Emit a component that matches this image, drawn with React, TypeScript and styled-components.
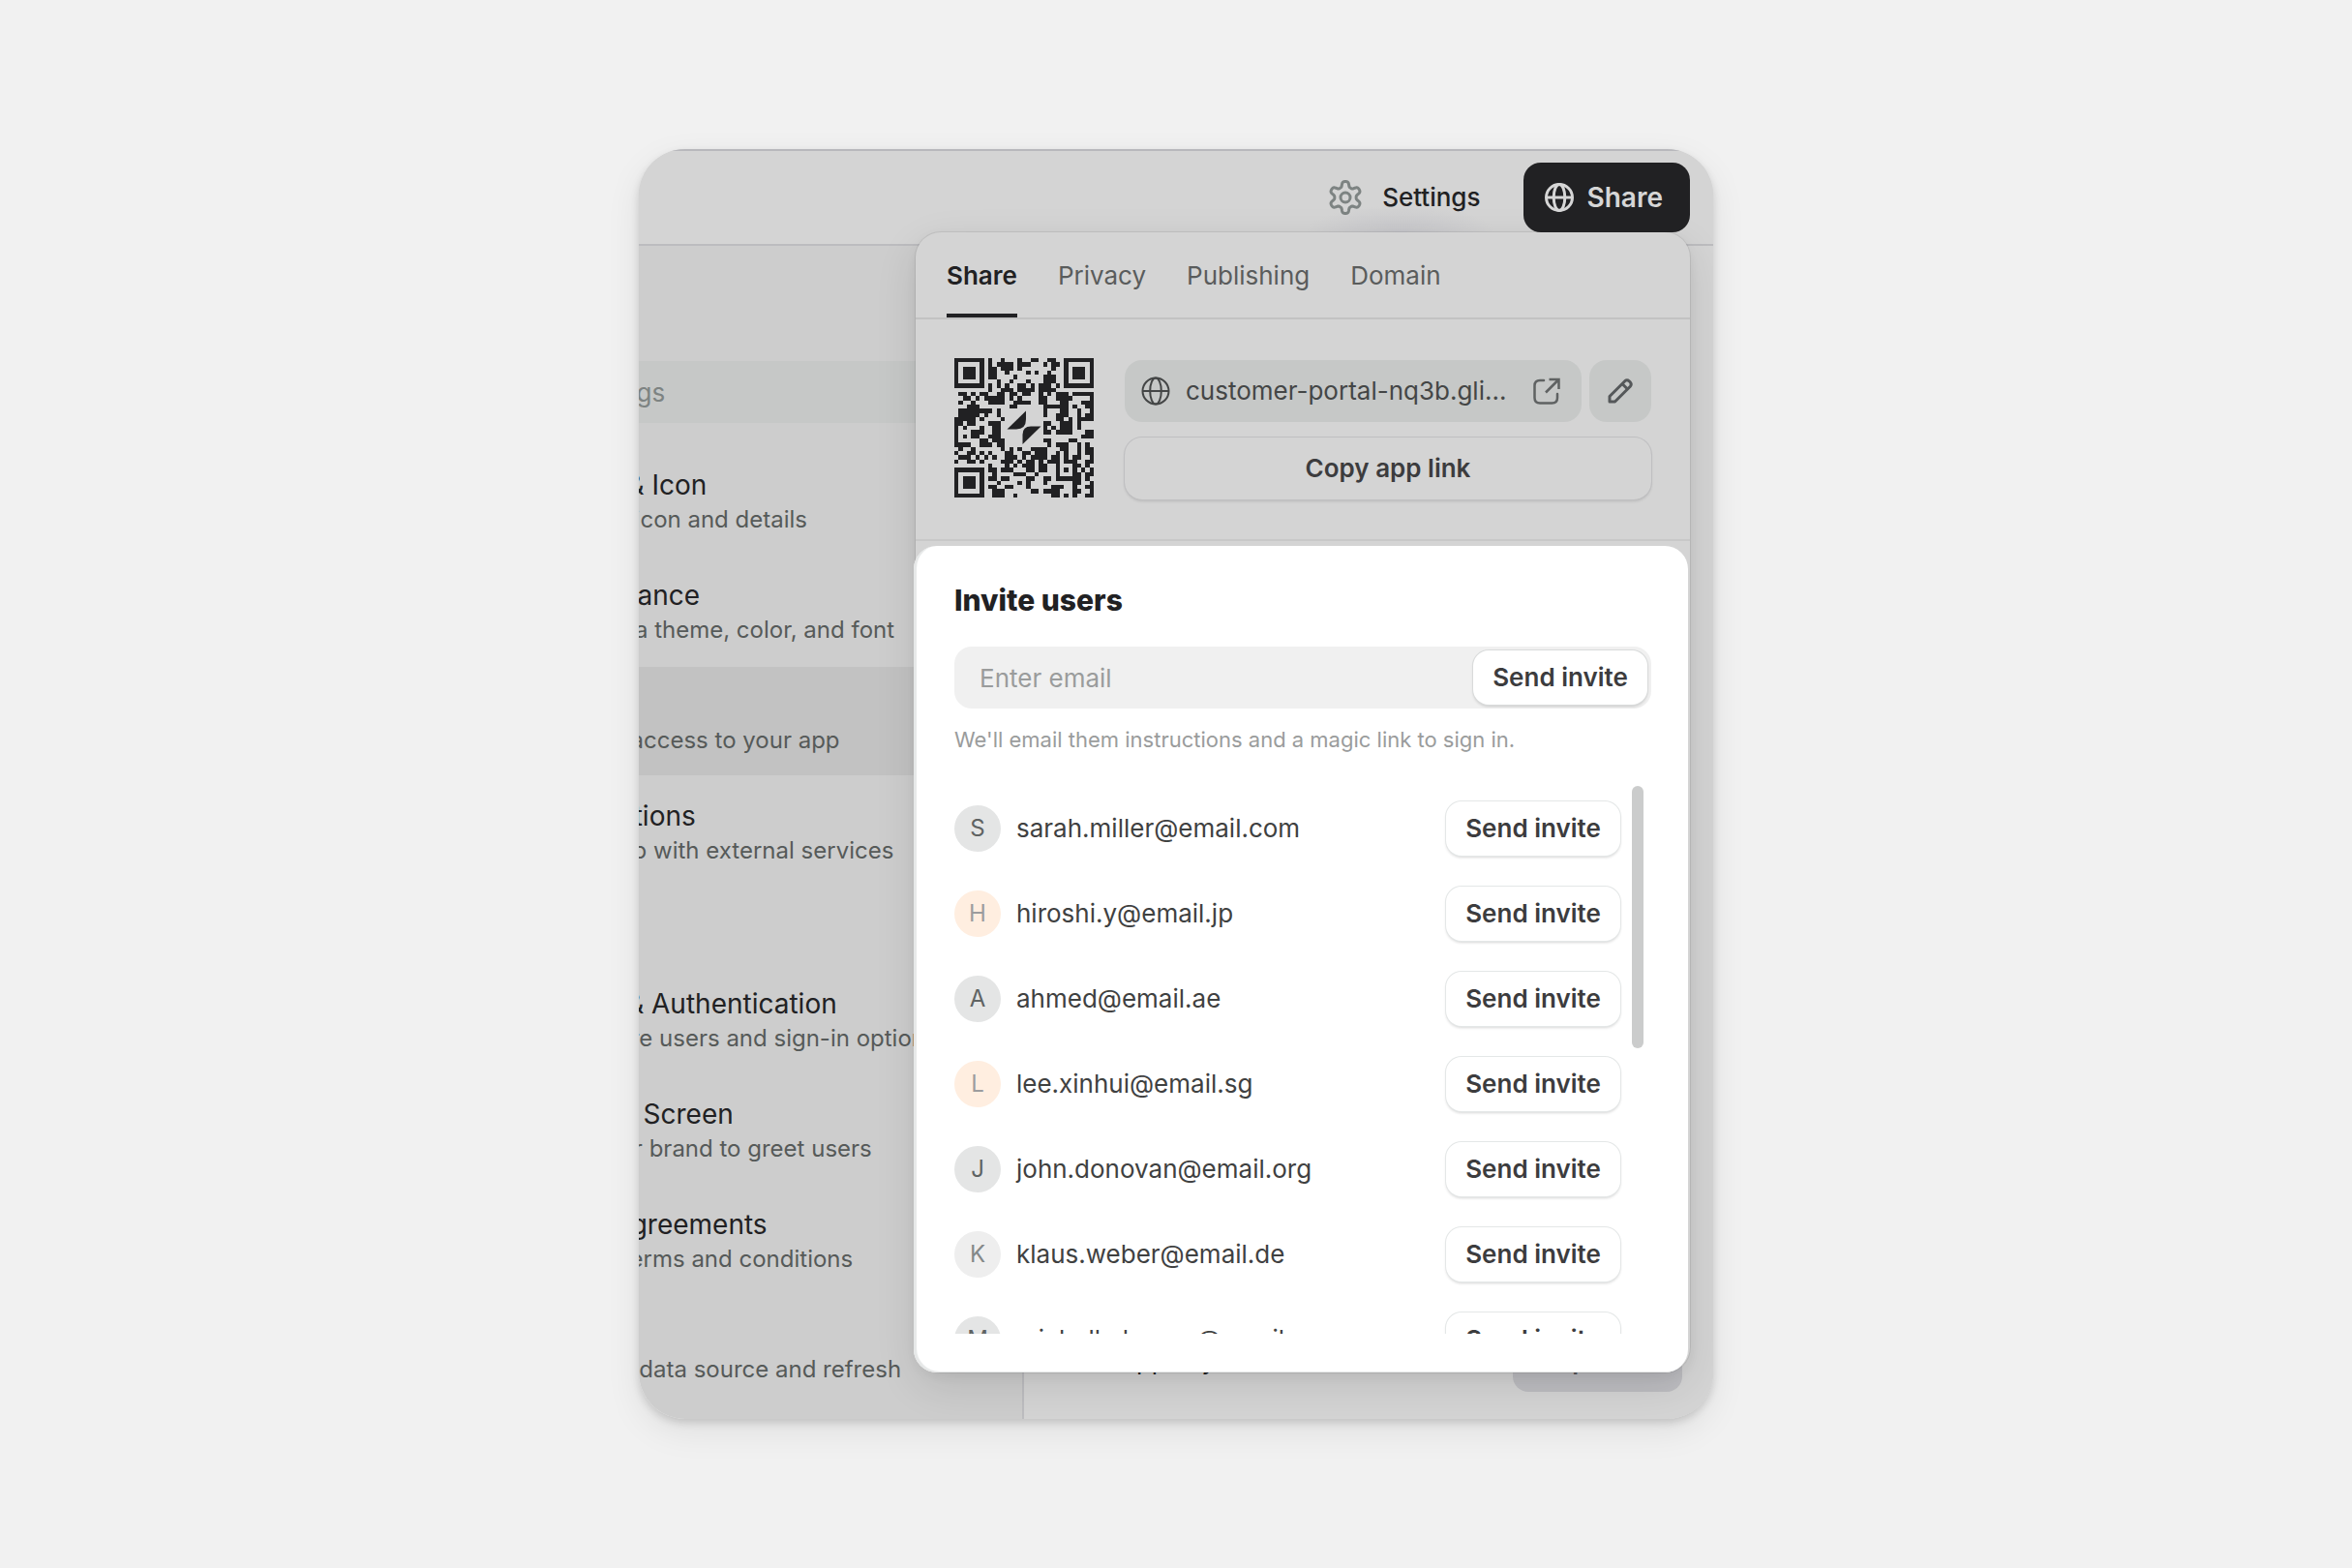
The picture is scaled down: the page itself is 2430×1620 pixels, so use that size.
import React from "react";
import styled, { createGlobalStyle } from "styled-components";

const GlobalStyle = createGlobalStyle`
  *, *::before, *::after { box-sizing: border-box; }
  body {
    margin: 0;
    background: #f1f1f1;
    color: #212123;
    font-family: Inter, "Liberation Sans", Arial, sans-serif;
    font-size: 26px;
    line-height: 32px;
    -webkit-font-smoothing: antialiased;
  }
  button, input {
    font: inherit;
    color: inherit;
    border: 0;
    margin: 0;
    padding: 0;
    background: none;
  }
  button { cursor: pointer; }
  h2, h3, p, ul { margin: 0; padding: 0; font-weight: inherit; font-size: inherit; }
  ul { list-style: none; }
`;

const Page = styled.main`
  min-height: 100vh;
  display: flex;
  align-items: center;
  justify-content: center;
`;

const Window = styled.div`
  position: relative;
  width: 100%;
  max-width: 1110px;
  overflow: hidden;
  border-radius: 48px;
  background: #cdcdcd;
`;

const WindowShadow = styled.div`
  width: 100%;
  max-width: 1110px;
  border-radius: 48px;
  box-shadow: 0 4px 8px rgba(0, 0, 0, 0.14), 0 12px 36px rgba(0, 0, 0, 0.08);
`;

const TopBar = styled.header`
  display: flex;
  align-items: center;
  justify-content: flex-end;
  gap: 44px;
  padding: 12px 24px;
  border-top: 2px solid #b8b8bc;
  border-bottom: 2px solid #bcbcbf;
  background: radial-gradient(ellipse 100px 30px at calc(100% - 323px) 86px, #c6c6ca, rgba(198, 198, 202, 0)) #d4d4d4;
`;

const SettingsButton = styled.button`
  display: flex;
  align-items: center;
  gap: 20px;
  font-weight: 500;
`;

const ShareButton = styled.button`
  position: relative;
  z-index: 2;
  display: flex;
  align-items: center;
  gap: 14px;
  height: 72px;
  padding: 0 28px 0 22px;
  border-radius: 18px;
  background: #212123;
  color: #d6d6d6;
  font-size: 28px;
  font-weight: 600;
`;

const Body = styled.div`
  display: flex;
`;

const Sidebar = styled.aside`
  flex: none;
  width: 638px;
  margin-left: -240px;
  padding: 119px 0 15px;
  border-right: 2px solid #bdbdc0;
`;

const SearchField = styled.input`
  display: block;
  width: 614px;
  height: 64px;
  margin-bottom: 24px;
  padding: 0 24px 0 77px;
  border-radius: 16px;
  background: #c6c8c7;
  &::placeholder { color: #7d8382; opacity: 1; }
`;

const NavGroup = styled.ul`
  display: grid;
  gap: 2px;
  & + & { margin-top: 82px; }
`;

const NavLink = styled.a<{ $active?: boolean }>`
  display: grid;
  gap: 2px;
  padding: 22px 24px 20px 142px;
  background: ${(p) => (p.$active ? "#c2c2c2" : "transparent")};
  color: inherit;
  text-decoration: none;
  white-space: nowrap;
`;

const NavTitle = styled.span`
  font-size: 28px;
  line-height: 36px;
`;

const NavHint = styled.span`
  font-size: 24px;
  line-height: 32px;
  color: #565a59;
`;

const Workspace = styled.section`
  flex: 1;
  display: flex;
  align-items: flex-end;
  justify-content: space-between;
  padding: 0 32px 28px 98px;
  background: #d4d4d4;
`;

const WorkspaceLabel = styled.span`
  line-height: 64px;
`;

const UpdateButton = styled.button`
  width: 175px;
  height: 64px;
  border-radius: 16px;
  background: #bdbdc1;
  font-weight: 600;
  color: #5b5b5e;
`;

const Popover = styled.div`
  position: absolute;
  z-index: 1;
  top: 86px;
  right: 24px;
  width: 800px;
  border-radius: 26px;
  background: #d4d4d4;
  box-shadow: 0 0 0 1px rgba(0, 0, 0, 0.07), 0 4px 12px rgba(0, 0, 0, 0.05),
    0 14px 44px rgba(0, 0, 0, 0.11);
`;

const Tabs = styled.div`
  display: flex;
  gap: 42px;
  padding: 0 32px;
  border-bottom: 2px solid #c2c2c2;
`;

const Tab = styled.button<{ $active?: boolean }>`
  height: 88px;
  padding-top: 6px;
  border-bottom: 4px solid ${(p) => (p.$active ? "#212123" : "transparent")};
  color: ${(p) => (p.$active ? "#212123" : "#5a5c5c")};
  font-weight: ${(p) => (p.$active ? 600 : 400)};
`;

const LinkSection = styled.section`
  display: flex;
  gap: 32px;
  padding: 40px 40px 41px;
  border-bottom: 2px solid #c8c8c8;
`;

const LinkControls = styled.div`
  flex: 1;
  display: grid;
  gap: 16px;
  padding-top: 2px;
`;

const UrlRow = styled.div`
  display: flex;
  gap: 8px;
`;

const UrlLink = styled.a`
  flex: 1;
  display: flex;
  align-items: center;
  height: 64px;
  padding: 0 22px 0 17px;
  border-radius: 18px;
  background: #c6c8c7;
  color: #444646;
  text-decoration: none;
`;

const UrlText = styled.span`
  flex: 1;
  padding-left: 16px;
  white-space: nowrap;
`;

const IconButton = styled.button`
  display: grid;
  place-items: center;
  width: 64px;
  height: 64px;
  border-radius: 18px;
  background: #c6c8c7;
`;

const CopyButton = styled.button`
  height: 64px;
  border-radius: 18px;
  color: #3c3c3e;
  font-weight: 600;
  box-shadow: 0 0 0 1px #bfbfc1, 0 2px 3px rgba(0, 0, 0, 0.12);
`;

const InvitePanel = styled.section`
  margin: 5px 2px 0 -2px;
  padding: 38px 38px 40px 42px;
  border-radius: 24px;
  background: #ffffff;
  box-shadow: inset 3px -1px 1px #e6e8e8;
`;

const PanelTitle = styled.h2`
  margin-bottom: 30px;
  font-size: 30px;
  line-height: 36px;
  font-weight: 800;
`;

const InviteForm = styled.form`
  display: flex;
  align-items: center;
  padding-right: 4px;
  border-radius: 18px;
  background: #f0f0f0;
`;

const EmailInput = styled.input`
  flex: 1;
  min-width: 0;
  height: 64px;
  padding: 0 26px;
  &::placeholder { color: #9a9c9c; opacity: 1; }
`;

const SendButton = styled.button<{ $raised?: boolean }>`
  flex: none;
  width: 180px;
  height: 56px;
  border-radius: 16px;
  background: #ffffff;
  color: #3c3c3e;
  font-weight: 600;
  box-shadow: 0 0 0 1px ${(p) => (p.$raised ? "#d9dbdb" : "#e4e7e7")},
    0 2px 3px rgba(0, 0, 0, 0.16);
`;

const Hint = styled.p`
  margin: 16px 0 32px;
  font-size: 22px;
  line-height: 32px;
  color: #9a9c9c;
`;

const ListArea = styled.div`
  display: flex;
  gap: 12px;
  max-height: 566px;
  padding-right: 8px;
  overflow: hidden;
`;

const PeopleList = styled.ul`
  flex: 1;
  margin-left: -4px;
  padding-left: 4px;
`;

const Person = styled.li`
  display: flex;
  align-items: center;
  height: 88px;
  color: #3f4141;
`;

type Tone = "gray" | "peach" | "light";

const toneFill: Record<Tone, string> = { gray: "#e4e5e5", peach: "#ffeee0", light: "#eeeeee" };
const toneInk: Record<Tone, string> = { gray: "#5f6363", peach: "#9c9c9e", light: "#848888" };

const Avatar = styled.span<{ $tone: Tone }>`
  display: grid;
  place-items: center;
  width: 48px;
  height: 48px;
  margin-right: 16px;
  border-radius: 50%;
  background: ${(p) => toneFill[p.$tone]};
  color: ${(p) => toneInk[p.$tone]};
  font-size: 24px;
`;

const Email = styled.span`
  flex: 1;
`;

const ScrollThumb = styled.div`
  width: 12px;
  height: 271px;
  border-radius: 6px;
  background: #cbcccc;
`;

const finder = (x: number, y: number) => (
  <g key={`${x}-${y}`}>
    <path fillRule="evenodd" d={`M${x} ${y}h7v7h-7z M${x + 1} ${y + 1}v5h5v-5z`} />
    <path d={`M${x + 2} ${y + 2}h3v3h-3z`} />
  </g>
);

/* Dark columns of each row of the code, finder squares left out. */
const qrRows = [
  "8 11 15 18 19 22 23",
  "8 10 11 12 13 15 16 17 21 23 24",
  "8 9 11 12 13 15 23",
  "8 9 12 17 19 22",
  "8 9 14 21 22 23",
  "10 13 17 21 22 23",
  "8 10 12 15 16 18 20 21 22 24",
  "8 11 12 13 15 16 17 18 20 21 22 23",
  "1 2 4 6 7 10 11 13 14 16 17 20 22 24 25 26 28 29 30 31 32",
  "2 3 5 7 8 9 10 11 13 15 20 21 24 25 26 27 32",
  "1 4 8 9 10 11 14 15 16 17 20 21 25 26 30 31 32",
  "3 4 5 13 14 21 22 23 24 25 26 28 31 32",
  "1 2 3 4 5 6 7 8 10 21 25 26 29 32",
  "1 2 3 4 5 7 10 21 24 25 26 29 31 32",
  "0 1 2 3 4 6 11 24 25 27 29 30 31 32",
  "0 1 3 4 8 9 10 21 22 25 26 27 29",
  "0 2 6 9 10 21 23 25 26 27 29",
  "0 4 5 6 9 10 21 22 24 25 26 27 31 32",
  "0 2 4 5 8 9 10 30 31 32",
  "0 6 7 9 10 11 21 22 27 28",
  "0 1 2 3 6 7 8 10 11 22 24 25 26 29 31",
  "1 4 11 13 15 18 19 20 21 25 26 29 31 32",
  "0 3 4 6 8 12 13 16 17 19 20 21 24 26 29 31 32",
  "1 2 3 5 7 9 12 13 14 16 18 19 20 21 23 24 26 28 29 32",
  "0 3 4 6 11 12 13 15 17 18 20 22 23 24 26 27 28 31 32",
  "8 12 14 16 17 18 20 21 24 28 29 31",
  "8 9 11 12 13 17 18 20 21 24 26 28 30 32",
  "9 14 15 16 19 24 28 29 31 32",
  "8 9 11 12 17 18 21 22 24 25 26 27 28 29 31",
  "10 15 17 21 28 29 32",
  "8 9 12 13 17 23 24 25 28 31 32",
  "9 10 11 18 19 21 22 23 24 28 29 32",
  "9 10 11 14 23 24 26 28 31 32",
];

const QrCode = () => (
  <svg width="144" height="144" viewBox="0 0 33 33" fill="#212123" shapeRendering="crispEdges" role="img" aria-label="App link code">
    {[finder(0, 0), finder(26, 0), finder(0, 26)]}
    {qrRows.map((row, y) => (
      <path key={y} d={row.split(" ").map((x) => `M${x} ${y}h1v1h-1z`).join("")} />
    ))}
    <g transform="scale(0.2292)" shapeRendering="auto">
      <path d="M54.5 73.5 74 54.5V63Q74 73.5 64 73.5Z" />
      <path d="M89.500 70.500 70.500 89V79Q70.500 70.500 79 70.500Z" />
    </g>
  </svg>
);

const GlobeIcon = ({ stroke = 3 }: { stroke?: number }) => (
  <svg width="30" height="30" viewBox="0 0 30 30" fill="none" stroke="currentColor" strokeWidth={stroke} aria-hidden="true">
    <circle cx="15" cy="15" r="13.500" />
    <ellipse cx="15" cy="15" rx="5.800" ry="13.500" />
    <path d="M1.500 15h27" />
  </svg>
);

const gearPath =
  Array.from({ length: 145 }, (_, i) => {
    const a = (i / 144) * Math.PI * 2 - Math.PI / 2;
    const r = 13.8 - 2.8 * Math.tanh(1.8 * Math.cos(6 * a));
    return `${i ? "L" : "M"}${(18 + r * Math.cos(a)).toFixed(2)} ${(18 + r * Math.sin(a)).toFixed(2)}`;
  }).join("") + "Z";

const GearIcon = () => (
  <svg width="36" height="36" viewBox="0 0 36 36" fill="none" stroke="#7d8382" strokeWidth="3" strokeLinejoin="round" aria-hidden="true">
    <path d={gearPath} />
    <circle cx="18" cy="18" r="5" />
  </svg>
);

const OpenIcon = () => (
  <svg width="28" height="28" viewBox="0 0 28 28" fill="none" stroke="#5f6262" strokeWidth="2.500" aria-hidden="true">
    <path d="M11 3H7Q1.500 3 1.500 8.500V21Q1.500 26.500 7 26.500H19.500Q25 26.500 25 21V17" strokeLinecap="round" />
    <path d="M16.500 2H26.500V12M26.500 2 13 15.500" />
  </svg>
);

const PencilIcon = () => (
  <svg width="28" height="28" viewBox="0 0 28 28" fill="none" stroke="#55585a" strokeWidth="3" strokeLinejoin="round" aria-hidden="true">
    <path d="M3 25V19.500L18.800 3.700Q21 1.800 23.200 3.800L24.200 4.800Q26.200 7 24.300 9.200L8.500 25Z" />
    <path d="M16 6.500 21.500 12" />
  </svg>
);

const accountLinks = [
  { title: "Name & Icon", hint: "Set app icon and details" },
  { title: "Appearance", hint: "Choose a theme, color, and font" },
  { title: "Users", hint: "Control access to your app", active: true },
  { title: "Integrations", hint: "Match up with external services" },
];

const userLinks = [
  { title: "Users & Authentication", hint: "Configure users and sign-in options" },
  { title: "Sign-in Screen", hint: "Use your brand to greet users" },
  { title: "User Agreements", hint: "Define terms and conditions" },
  { title: "Data", hint: "Manage data source and refresh" },
];

const people: { email: string; tone: Tone }[] = [
  { email: "sarah.miller@email.com", tone: "gray" },
  { email: "hiroshi.y@email.jp", tone: "peach" },
  { email: "ahmed@email.ae", tone: "gray" },
  { email: "lee.xinhui@email.sg", tone: "peach" },
  { email: "john.donovan@email.org", tone: "gray" },
  { email: "klaus.weber@email.de", tone: "light" },
  { email: "michelle.brown@email.com", tone: "gray" },
];

const NavList = ({ items }: { items: { title: string; hint: string; active?: boolean }[] }) => (
  <NavGroup>
    {items.map((item) => (
      <li key={item.title}>
        <NavLink href="#" $active={item.active}>
          <NavTitle>{item.title}</NavTitle>
          <NavHint>{item.hint}</NavHint>
        </NavLink>
      </li>
    ))}
  </NavGroup>
);

export default function App() {
  return (
    <Page>
      <GlobalStyle />
      <WindowShadow>
        <Window>
          <TopBar>
            <SettingsButton type="button">
              <GearIcon />
              Settings
            </SettingsButton>
            <ShareButton type="button">
              <GlobeIcon />
              Share
            </ShareButton>
          </TopBar>

          <Body>
            <Sidebar>
              <SearchField type="text" placeholder="Search settings" aria-label="Search settings" />
              <NavList items={accountLinks} />
              <NavList items={userLinks} />
            </Sidebar>
            <Workspace>
              <WorkspaceLabel>App key</WorkspaceLabel>
              <UpdateButton type="button">Update</UpdateButton>
            </Workspace>
          </Body>

          <Popover>
            <Tabs role="tablist">
              <Tab type="button" role="tab" aria-selected="true" $active>Share</Tab>
              <Tab type="button" role="tab" aria-selected="false">Privacy</Tab>
              <Tab type="button" role="tab" aria-selected="false">Publishing</Tab>
              <Tab type="button" role="tab" aria-selected="false">Domain</Tab>
            </Tabs>

            <LinkSection>
              <QrCode />
              <LinkControls>
                <UrlRow>
                  <UrlLink href="#">
                    <GlobeIcon stroke={2} />
                    <UrlText>customer-portal-nq3b.gli...</UrlText>
                    <OpenIcon />
                  </UrlLink>
                  <IconButton type="button" aria-label="Edit link">
                    <PencilIcon />
                  </IconButton>
                </UrlRow>
                <CopyButton type="button">Copy app link</CopyButton>
              </LinkControls>
            </LinkSection>

            <InvitePanel>
              <PanelTitle>Invite users</PanelTitle>
              <InviteForm>
                <EmailInput type="email" placeholder="Enter email" aria-label="Enter email" />
                <SendButton type="button" $raised>Send invite</SendButton>
              </InviteForm>
              <Hint>We'll email them instructions and a magic link to sign in.</Hint>
              <ListArea>
                <PeopleList>
                  {people.map((person) => (
                    <Person key={person.email}>
                      <Avatar $tone={person.tone}>{person.email[0].toUpperCase()}</Avatar>
                      <Email>{person.email}</Email>
                      <SendButton type="button">Send invite</SendButton>
                    </Person>
                  ))}
                </PeopleList>
                <ScrollThumb />
              </ListArea>
            </InvitePanel>
          </Popover>
        </Window>
      </WindowShadow>
    </Page>
  );
}
